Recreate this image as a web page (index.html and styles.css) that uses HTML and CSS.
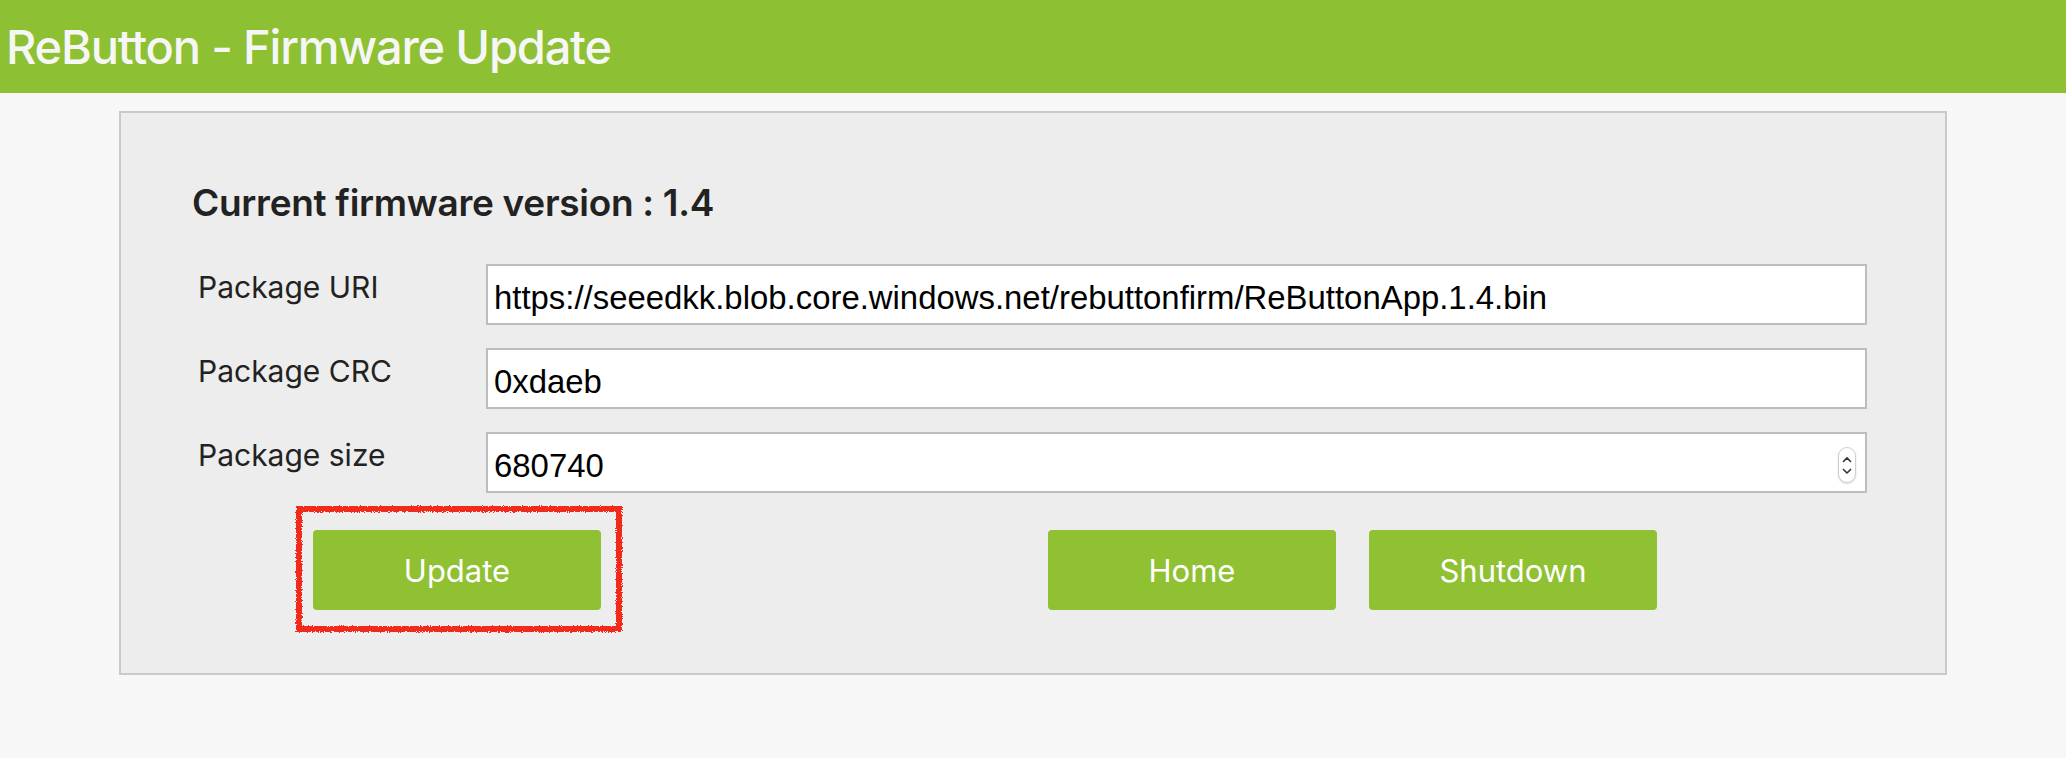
FILE: index.html
```html
<!DOCTYPE html>
<html lang="en">
<head>
<meta charset="utf-8">
<title>ReButton - Firmware Update</title>
<link rel="stylesheet" href="styles.css">
</head>
<body>
<svg class="defs" width="0" height="0" aria-hidden="true">
  <filter id="rough" x="-5%" y="-5%" width="110%" height="110%">
    <feTurbulence type="fractalNoise" baseFrequency="0.9" numOctaves="2" seed="3" result="noise"/>
    <feDisplacementMap in="SourceGraphic" in2="noise" scale="4" xChannelSelector="R" yChannelSelector="G"/>
  </filter>
</svg>
<header class="topbar">
  <h1 class="topbar-title">ReButton - Firmware Update</h1>
</header>
<main class="panel">
  <h2 class="version">Current firmware version : 1.4</h2>
  <form class="fw-form">
    <label class="fw-label" for="uri">Package URI</label>
    <div class="fw-field"><input class="fw-input" id="uri" type="text" value="https://seeedkk.blob.core.windows.net/rebuttonfirm/ReButtonApp.1.4.bin"></div>
    <label class="fw-label" for="crc">Package CRC</label>
    <div class="fw-field"><input class="fw-input" id="crc" type="text" value="0xdaeb"></div>
    <label class="fw-label" for="size">Package size</label>
    <div class="fw-field">
      <input class="fw-input" id="size" type="text" value="680740">
      <span class="spinner" aria-hidden="true">
        <svg width="18" height="36" viewBox="0 0 18 36">
          <path d="M5 14 L9 10 L13 14" fill="none" stroke="#333" stroke-width="1.8" stroke-linecap="round" stroke-linejoin="round"/>
          <path d="M5 23 L9 27 L13 23" fill="none" stroke="#333" stroke-width="1.8" stroke-linecap="round" stroke-linejoin="round"/>
        </svg>
      </span>
    </div>
  </form>
  <div class="actions">
    <span class="highlight"><button class="btn" type="button">Update</button></span>
    <div class="actions-right">
      <button class="btn" type="button">Home</button>
      <button class="btn" type="button">Shutdown</button>
    </div>
  </div>
</main>
</body>
</html>
```

FILE: styles.css
```css
html, body {
  margin: 0;
  padding: 0;
}
body {
  background: #f7f7f7;
  font-family: Inter, "Noto Sans", sans-serif;
  color: #222;
}
.defs {
  position: absolute;
  width: 0;
  height: 0;
}
.topbar {
  height: 93px;
  background: #8dc133;
  display: flex;
  align-items: center;
}
.topbar-title {
  margin: 0;
  padding-left: 6px;
  font-size: 47px;
  font-weight: 500;
  color: #f6f6f6;
  letter-spacing: -1.2px;
}
.panel {
  box-sizing: border-box;
  width: 1828px;
  margin: 18px auto 0;
  height: 564px;
  border: 2px solid #c9c9c9;
  background: #ededed;
  padding: 70px 78px 0 71px;
}
.version {
  margin: 0 0 41px 0;
  font-size: 37px;
  font-weight: 600;
  line-height: 40px;
  letter-spacing: -0.3px;
  color: #222;
}
.fw-form {
  display: grid;
  grid-template-columns: 294px 1fr;
  row-gap: 23px;
  margin: 0;
}
.fw-label {
  padding-left: 6px;
  font-size: 30px;
  line-height: 36px;
  padding-top: 5px;
  color: #222;
}
.fw-field {
  position: relative;
}
.fw-input {
  box-sizing: border-box;
  width: 100%;
  height: 61px;
  border: 2px solid #bdbdbd;
  background: #fff;
  padding: 6px 6px 0 6px;
  font-family: "Liberation Sans", Arial, sans-serif;
  font-size: 32.9px;
  color: #000;
  outline: none;
}
.spinner {
  position: absolute;
  right: 11px;
  top: 15px;
  width: 18px;
  height: 36px;
  border-radius: 9px;
  border: 1px solid #d0d0d0;
  box-shadow: 0 1px 2px rgba(0,0,0,0.15);
  background: #fff;
  box-sizing: border-box;
  display: flex;
  align-items: center;
  justify-content: center;
}
.spinner svg {
  display: block;
}
.actions {
  display: flex;
  align-items: center;
  margin-top: 37px;
  padding-left: 121px;
}
.actions-right {
  display: flex;
  gap: 33px;
  margin-left: 447px;
}
.highlight {
  position: relative;
  display: inline-block;
}
.highlight::after {
  content: "";
  position: absolute;
  left: -17px;
  top: -24px;
  right: -21px;
  bottom: -22px;
  border: 6px solid #f22a1a;
  pointer-events: none;
  filter: url(#rough);
}
.btn {
  width: 288px;
  height: 80px;
  border: none;
  border-radius: 4px;
  background: #8fc133;
  color: #fff;
  font-family: Inter, "Noto Sans", sans-serif;
  font-size: 31px;
  font-weight: 400;
  cursor: pointer;
}
```
